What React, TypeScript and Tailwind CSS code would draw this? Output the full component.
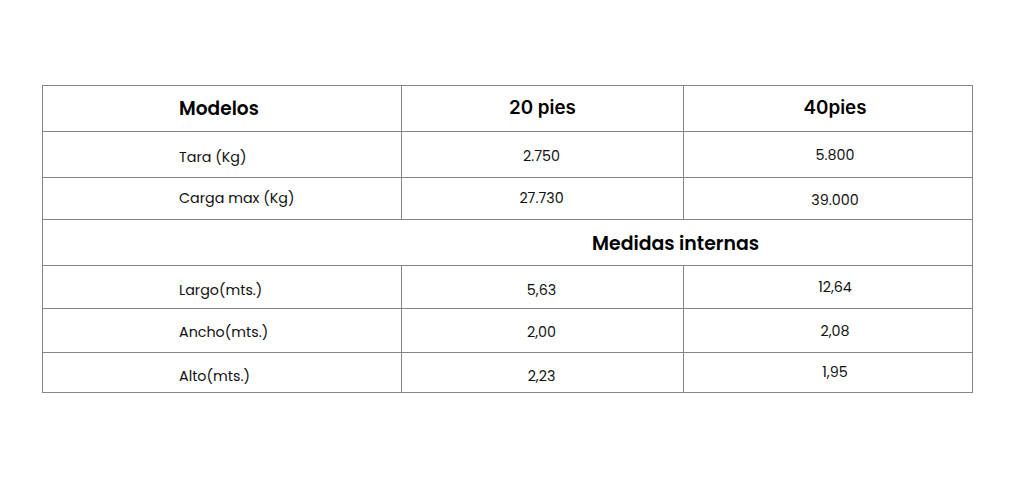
import React from "react";

type Fila = {
  etiqueta: string;
  v20: string;
  v40: string;
  alto: string;
  // pequeños ajustes verticales por columna
  off: [string, string, string];
};

const pesos: Fila[] = [
  { etiqueta: "Tara (Kg)", v20: "2.750", v40: "5.800", alto: "h-[46px]", off: ["pt-[6px]", "pt-[4px]", "pt-[2px]"] },
  { etiqueta: "Carga max (Kg)", v20: "27.730", v40: "39.000", alto: "h-[42px]", off: ["pt-[1px]", "pt-[1px]", "pt-[5px]"] },
];

const medidas: Fila[] = [
  { etiqueta: "Largo(mts.)", v20: "5,63", v40: "12,64", alto: "h-[43px]", off: ["pt-[8px]", "pt-[7px]", "pt-[1px]"] },
  { etiqueta: "Ancho(mts.)", v20: "2,00", v40: "2,08", alto: "h-[44px]", off: ["pt-[5px]", "pt-[5px]", "pt-[3px]"] },
  { etiqueta: "Alto(mts.)", v20: "2,23", v40: "1,95", alto: "h-[40px]", off: ["pt-[8px]", "pt-[8px]", "pt-[1px]"] },
];

const poppins = "font-['Poppins','Inter',sans-serif]";
const celda = "border border-[#858585] p-0 align-middle";

function FilaDatos({ f }: { f: Fila }) {
  return (
    <tr className={f.alto}>
      <td className={`${celda} pl-[136px] text-left text-[14.3px] text-[#111] ${poppins} ${f.off[0]}`}>
        {f.etiqueta}
      </td>
      <td className={`${celda} text-center text-[14.3px] text-[#111] pr-[2px] ${poppins} ${f.off[1]}`}>{f.v20}</td>
      <td className={`${celda} text-center text-[14.3px] text-[#111] pl-[14px] ${poppins} ${f.off[2]}`}>{f.v40}</td>
    </tr>
  );
}

export default function App() {
  return (
    <div className="w-[1024px] h-[503px] bg-white pt-[85px] pl-[42px] font-['Inter',sans-serif]">
      <table className="border-collapse table-fixed w-[930px]">
        <colgroup>
          <col className="w-[359px]" />
          <col className="w-[282px]" />
          <col className="w-[289px]" />
        </colgroup>
        <tbody>
          <tr className="h-[46px]">
            <td className={`${celda} pl-[136px] text-left text-[18.6px] font-semibold text-black ${poppins}`}>Modelos</td>
            <td className={`${celda} text-center text-[18.8px] font-semibold text-black`}>20 pies</td>
            <td className={`${celda} text-center text-[18.8px] font-semibold text-black pl-[14px]`}>40pies</td>
          </tr>
          {pesos.map(f => (
            <FilaDatos key={f.etiqueta} f={f} />
          ))}
          <tr className="h-[46px]">
            <td colSpan={3} className={`${celda} pl-[549px] pt-[4px] text-left text-[18.9px] font-semibold text-black ${poppins}`}>
              Medidas internas
            </td>
          </tr>
          {medidas.map(f => (
            <FilaDatos key={f.etiqueta} f={f} />
          ))}
        </tbody>
      </table>
    </div>
  );
}
